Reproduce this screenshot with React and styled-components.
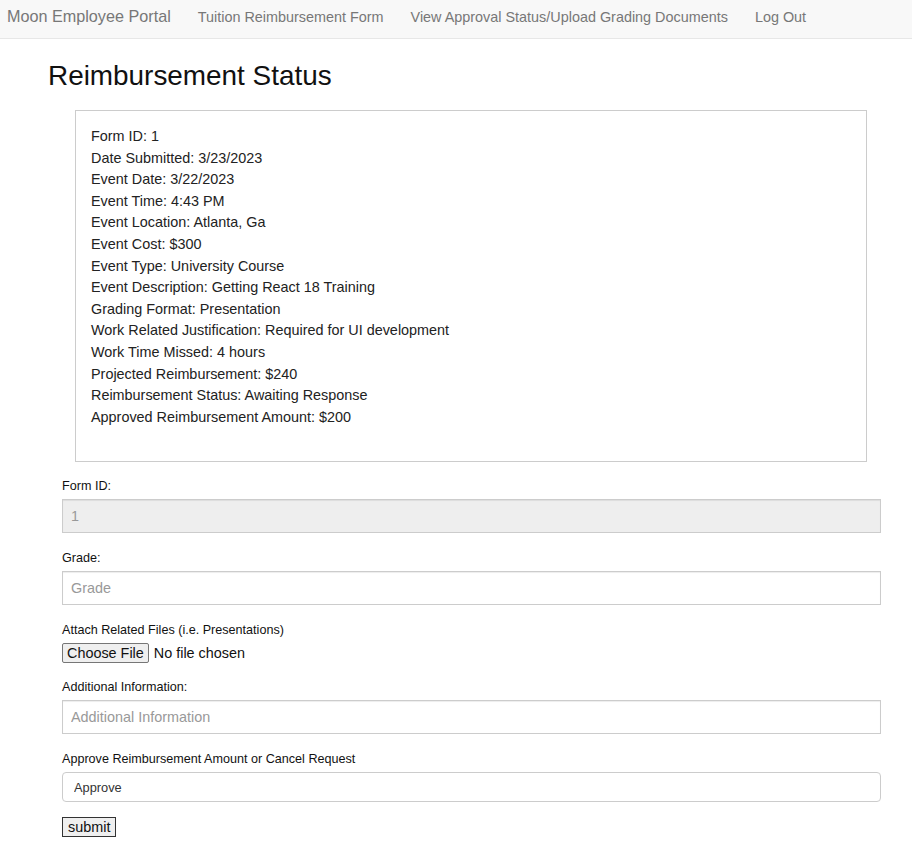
import React from "react";
import styled, { createGlobalStyle } from "styled-components";

const GlobalStyle = createGlobalStyle`
  body {
    margin: 0;
    background: #fff;
    font-family: "Liberation Sans", Arial, sans-serif;
    color: #333;
  }
  * { box-sizing: border-box; }
`;

const Navbar = styled.nav`
  display: flex;
  align-items: center;
  height: 39px;
  background-color: #f8f8f8;
  border-bottom: 1px solid #e7e7e7;
  padding: 0 0 5px 7px;
`;

const Brand = styled.a`
  font-size: 16.2px;
  color: #777;
  text-decoration: none;
  margin-right: 13.5px;
`;

const NavLink = styled.a`
  font-size: 14.4px;
  color: #777;
  text-decoration: none;
  padding: 0 13.5px;
`;

const Page = styled.main`
  padding: 21px 0 30px 48px;
`;

const Title = styled.h2`
  margin: 0 0 18px;
  font-size: 27.9px;
  font-weight: 400;
  line-height: 32px;
  color: #111;
`;

const StatusBox = styled.div`
  margin-left: 27px;
  width: 792px;
  min-height: 352px;
  border: 1px solid #ccc;
  padding: 15px 15px 30px;
  font-size: 14.4px;
  line-height: 21.6px;
  color: #222;
`;

const Form = styled.form`
  margin: 17px 0 0 14px;
  width: 819px;
`;

const Group = styled.div`
  display: flex;
  flex-direction: column;
  margin-bottom: ${(p) => p.$gap || 18}px;
`;

const Label = styled.label`
  font-size: 12.6px;
  line-height: 14px;
  color: #111;
  margin-bottom: 6px;
`;

const TextInput = styled.input`
  height: 34px;
  width: 100%;
  border: 1px solid #ccc;
  border-radius: 0;
  padding: 0 8px;
  font-family: "Liberation Sans", Arial, sans-serif;
  font-size: 14.4px;
  color: #555;
  background: ${(p) => (p.disabled ? "#eee" : "#fff")};
  box-shadow: inset 0 1px 1px rgba(0, 0, 0, 0.075);

  &:disabled { color: #999; }
  &::placeholder { color: #999; }
`;

const FileInput = styled.input`
  font-family: "Liberation Sans", Arial, sans-serif;
  font-size: 14.4px;
  color: #111;
  height: 20px;

  &::file-selector-button {
    font-family: "Liberation Sans", Arial, sans-serif;
    font-size: 14.4px;
    height: 20px;
    padding: 0 4px;
    margin-right: 5px;
    border: 1px solid #767676;
    border-radius: 2px;
    background: #efefef;
    color: #111;
  }
`;

const Select = styled.select`
  appearance: none;
  height: 30px;
  width: 100%;
  border: 1px solid #ccc;
  border-radius: 4px;
  padding: 0 11px;
  font-family: "Liberation Sans", Arial, sans-serif;
  font-size: 12.8px;
  color: #333;
  background: #fff;
`;

const SubmitButton = styled.button`
  font-family: "Liberation Sans", Arial, sans-serif;
  font-size: 14.4px;
  height: 20px;
  padding: 0 5px;
  border: 1px solid #333;
  border-radius: 0;
  background: #efefef;
  color: #111;
`;

const details = [
  "Form ID: 1",
  "Date Submitted: 3/23/2023",
  "Event Date: 3/22/2023",
  "Event Time: 4:43 PM",
  "Event Location: Atlanta, Ga",
  "Event Cost: $300",
  "Event Type: University Course",
  "Event Description: Getting React 18 Training",
  "Grading Format: Presentation",
  "Work Related Justification: Required for UI development",
  "Work Time Missed: 4 hours",
  "Projected Reimbursement: $240",
  "Reimbursement Status: Awaiting Response",
  "Approved Reimbursement Amount: $200",
];

export default function App() {
  return (
    <>
      <GlobalStyle />
      <Navbar>
        <Brand href="#">Moon Employee Portal</Brand>
        <NavLink href="#">Tuition Reimbursement Form</NavLink>
        <NavLink href="#">View Approval Status/Upload Grading Documents</NavLink>
        <NavLink href="#">Log Out</NavLink>
      </Navbar>
      <Page>
        <Title>Reimbursement Status</Title>
        <StatusBox>
          {details.map((line) => (
            <div key={line}>{line}</div>
          ))}
        </StatusBox>
        <Form onSubmit={(e) => e.preventDefault()}>
          <Group>
            <Label>Form ID:</Label>
            <TextInput type="text" value="1" disabled readOnly />
          </Group>
          <Group>
            <Label>Grade:</Label>
            <TextInput type="text" placeholder="Grade" />
          </Group>
          <Group $gap={17}>
            <Label>Attach Related Files (i.e. Presentations)</Label>
            <FileInput type="file" />
          </Group>
          <Group>
            <Label>Additional Information:</Label>
            <TextInput type="text" placeholder="Additional Information" />
          </Group>
          <Group $gap={15}>
            <Label>Approve Reimbursement Amount or Cancel Request</Label>
            <Select defaultValue="approve">
              <option value="approve">Approve</option>
              <option value="cancel">Cancel</option>
            </Select>
          </Group>
          <SubmitButton type="submit">submit</SubmitButton>
        </Form>
      </Page>
    </>
  );
}
